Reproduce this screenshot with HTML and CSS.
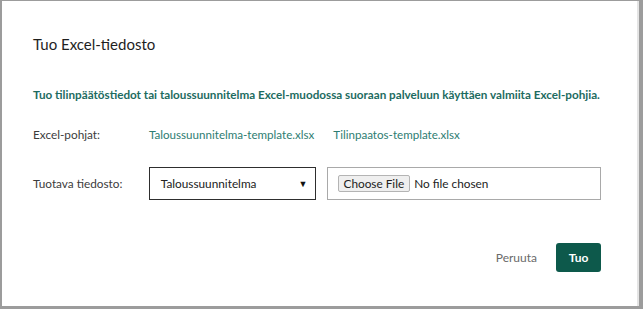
FILE: index.html
```html
<!DOCTYPE html>
<html lang="fi">
  <head>
    <meta charset="UTF-8" />
    <meta name="viewport" content="width=device-width, initial-scale=1.0" />
    <title>Tuo Excel-tiedosto</title>
    <link rel="stylesheet" href="styles.css">
  </head>

  <body>
    <div class="modal">
      <h1 class="modal-title">Tuo Excel-tiedosto</h1>

      <div class="modal-body">
        <p class="modal-info">
          Tuo tilinpäätöstiedot tai taloussuunnitelma Excel-muodossa suoraan palveluun käyttäen valmiita Excel-pohjia.
        </p>

        <div class="form-row">
          <span class="form-label">Excel-pohjat:</span>
          <div class="templates">
            <a href="#">Taloussuunnitelma-template.xlsx</a>
            <a href="#">Tilinpaatos-template.xlsx</a>
          </div>
        </div>

        <div class="form-row form-row-input">
          <span class="form-label">Tuotava tiedosto:</span>
          <div class="select-box">
            <span>Taloussuunnitelma</span>
            <span class="select-arrow">&#9660;</span>
          </div>
          <div class="file-box">
            <span class="file-button">Choose File</span>
            <span class="file-name">No file chosen</span>
          </div>
        </div>
      </div>

      <div class="modal-footer">
        <button class="btn-cancel">Peruuta</button>
        <button class="btn-primary">Tuo</button>
      </div>
    </div>
  </body>
</html>
```

FILE: styles.css
```css
* {
  margin: 0;
  padding: 0;
  box-sizing: border-box;
}

body {
  background: #9c9c9c;
  padding: 1px 4px 3px 2px;
  font-family: Lato, "Open Sans", sans-serif;
  color: #333;
}

.modal {
  background: #fff;
  height: 305px;
  padding: 0 36px 0 31px;
  display: flex;
  flex-direction: column;
  border-right: 2px solid #e4e4e4;
}

.modal-title {
  font-size: 15px;
  font-weight: 400;
  color: #1e1e1e;
  line-height: 20px;
  margin-top: 33px;
}

.modal-body {
  margin-top: 30px;
}

.modal-info {
  font-size: 11.7px;
  font-weight: 700;
  color: #1d6b5f;
  line-height: 20px;
  white-space: nowrap;
}

.form-row {
  display: flex;
  align-items: center;
  margin-top: 21px;
  font-size: 11.8px;
  line-height: 20px;
}

.form-label {
  width: 116px;
  color: #3c3c3c;
}

.templates {
  display: flex;
  gap: 19px;
  font-size: 11.6px;
}

.templates a {
  color: #2e7d72;
  text-decoration: none;
}

.form-row-input {
  margin-top: 22px;
}

.select-box {
  width: 167px;
  height: 33px;
  border: 1px solid #2e2e2e;
  display: flex;
  align-items: center;
  justify-content: space-between;
  padding: 0 7px 0 11px;
  color: #222;
}

.select-arrow {
  font-size: 9px;
  color: #111;
}

.file-box {
  width: 275px;
  height: 33px;
  margin-left: 11px;
  border: 1px solid #a9a9a9;
  display: flex;
  align-items: center;
  padding: 0 10px;
  color: #222;
}

.file-button {
  line-height: 15px;
  padding: 0 5px;
  background: #efefef;
  border: 1px solid #b4b4b4;
  border-radius: 2px;
  margin-right: 4px;
}

.modal-footer {
  margin-top: auto;
  margin-bottom: 34px;
  display: flex;
  justify-content: flex-end;
  align-items: center;
  gap: 19px;
}

.modal-footer button {
  font-family: inherit;
  font-size: 12px;
  border: none;
  height: 29px;
}

.btn-cancel {
  background: none;
  color: #6a6a6a;
}

.btn-primary {
  width: 45px;
  background: #0d594b;
  color: #fff;
  font-weight: 700;
  border-radius: 3px;
}
```
